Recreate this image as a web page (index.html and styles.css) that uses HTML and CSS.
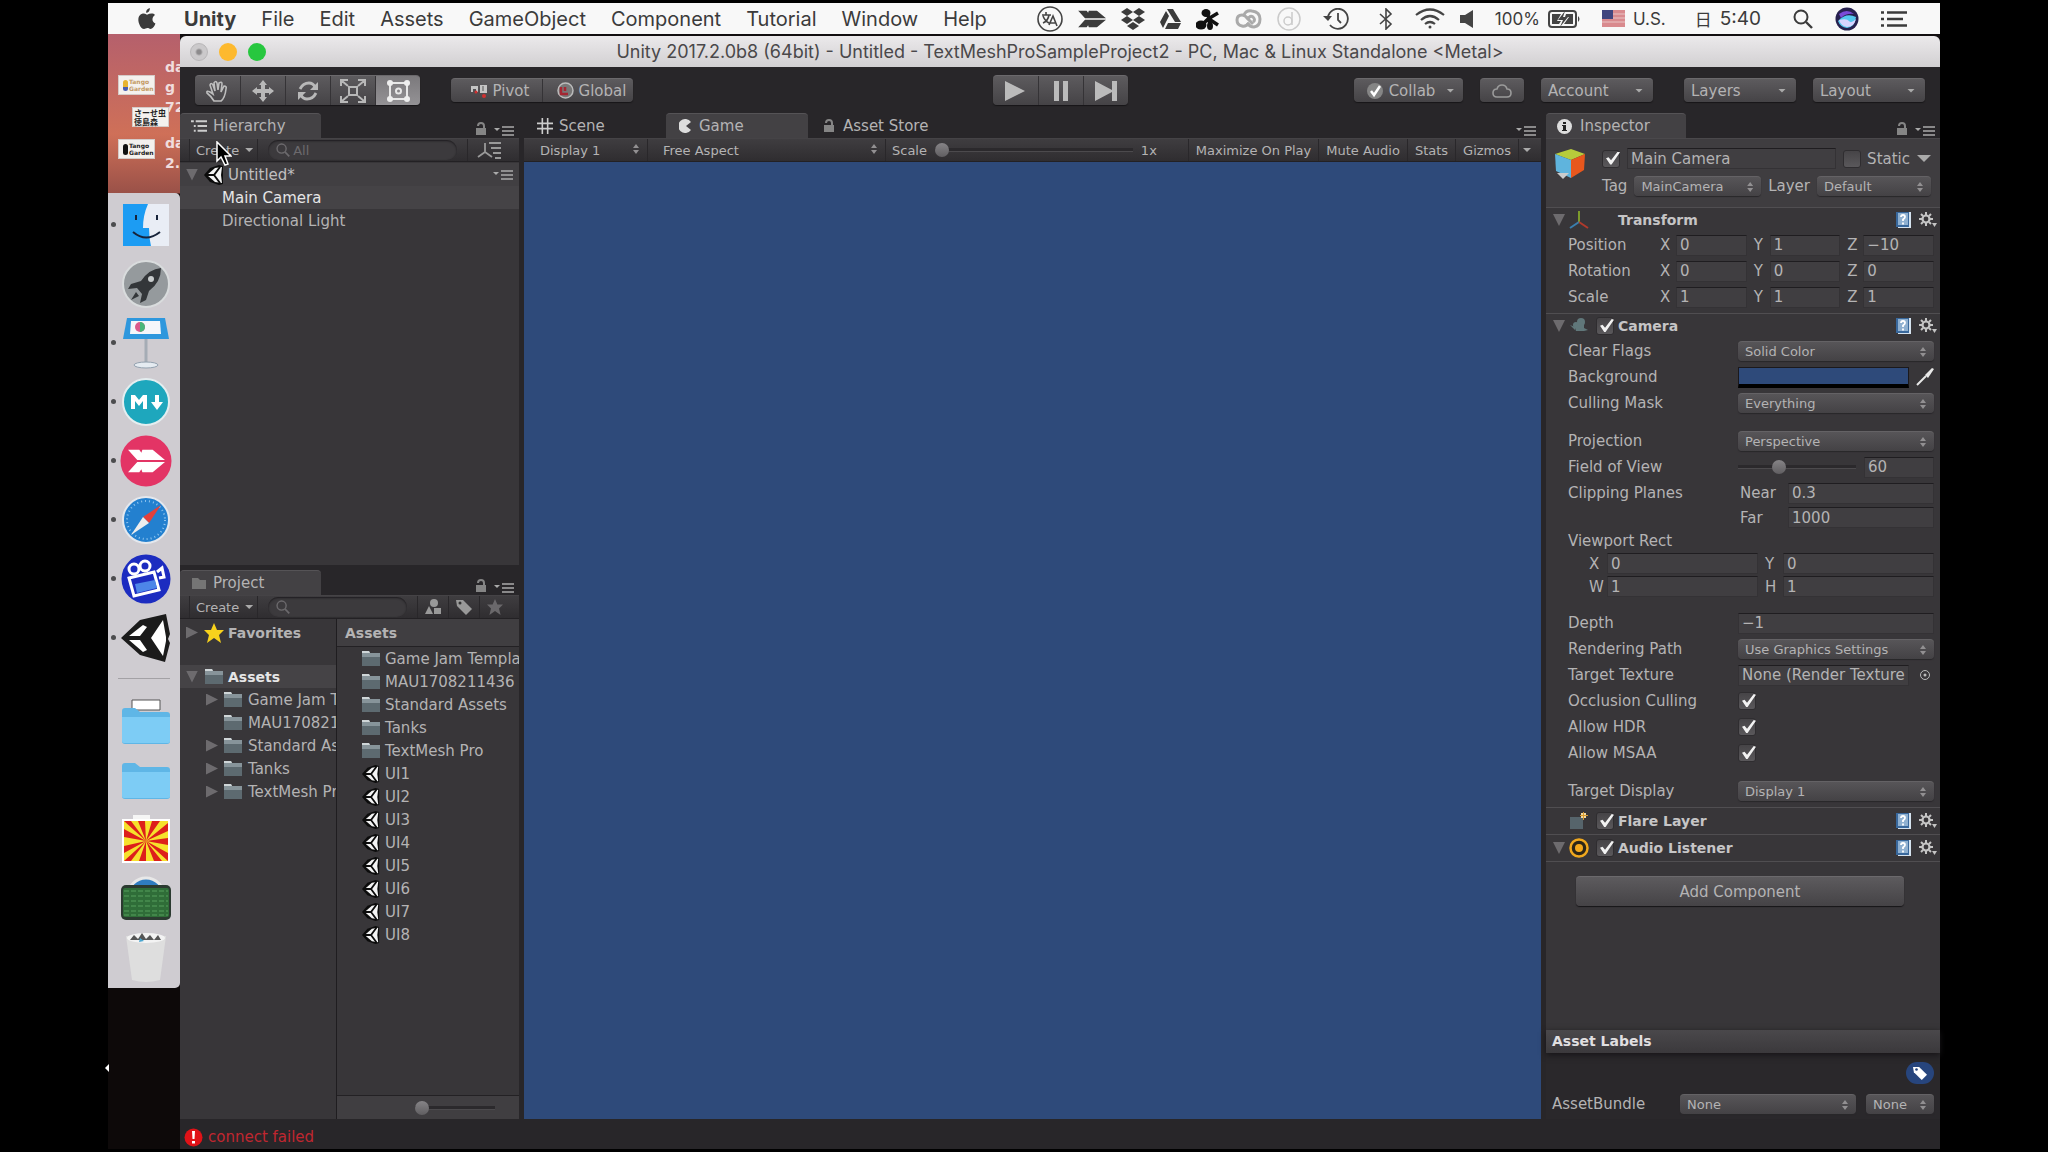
FILE: index.html
```html
<!DOCTYPE html>
<html lang="en">
<head>
    <meta charset="UTF-8">
    <meta name="viewport" content="width=device-width, initial-scale=1.0">
    <title>Unity 2017.2.0b8 (64bit) - Untitled</title>
    <link rel="stylesheet" href="styles.css">
</head>
<body>

<!-- Shared icons -->
<svg class="defs" aria-hidden="true">
    <symbol id="i-scene" viewBox="0 0 20 20">
        <path d="M0 10 6 3l9-3 4 1v18l-4 1-9-3z" fill="#0c0c0c"/>
        <path d="M3 10 11 3l7-1-1 8 1 8-7-1z" fill="#f4f4f4"/>
        <path d="M2 10h8l6-8M10 10l6 8" stroke="#0c0c0c" stroke-width="2" fill="none"/>
    </symbol>
    <symbol id="i-folder" viewBox="0 0 20 18">
        <path d="M1 2h7l1 2h10v12H1z" fill="#5d6a70"/>
        <path d="M1 1h7l1 2h10v4H1z" fill="#87949a"/>
        <path d="M1 1h7l1 2H1z" fill="#cfd6d8"/>
    </symbol>
    <symbol id="i-menu" viewBox="0 0 20 10">
        <path d="M0 2h6L3 5z" fill="#aaa"/>
        <path d="M8 1h12M8 5h12M8 9h12" stroke="#aaa" stroke-width="1.500"/>
    </symbol>
    <symbol id="i-lock" viewBox="0 0 12 14">
        <path d="M1 6h10v7H1z" fill="#858585"/>
        <path d="M3 4a3 3 0 0 1 6 0v3" stroke="#858585" stroke-width="2" fill="none"/>
    </symbol>
    <symbol id="i-help" viewBox="0 0 18 18">
        <path d="M2 1h13v15H2z" fill="#39689c"/>
        <path d="M15 1h2v16H4v-1h11z" fill="#d5e2ee"/>
        <path d="M4 2h10v12H4z" fill="#8fb0d0"/>
        <path d="M7 6q0-2 2-2t2 2q0 1-2 2.500V10M9 11.500v2" fill="none" stroke="#fff" stroke-width="1.800"/>
    </symbol>
    <symbol id="i-gear" viewBox="0 0 18 16">
        <circle cx="7" cy="7" r="3.500" fill="none" stroke="#c4c4c4" stroke-width="2.200"/>
        <path d="M7 0v3M7 11v3M0 7h3M11 7h3M2 2l2 2M10 10l2 2M12 2l-2 2M4 10l-2 2" stroke="#c4c4c4" stroke-width="2"/>
        <path d="M13 11h5l-2.500 4z" fill="#c4c4c4"/>
    </symbol>
    <symbol id="i-zoom" viewBox="0 0 20 20">
        <circle cx="8" cy="8" r="6.500" fill="none" stroke="currentColor" stroke-width="2"/>
        <path d="m13 13 6 6" stroke="currentColor" stroke-width="2.400"/>
    </symbol>
    <symbol id="i-feather" viewBox="0 0 36 22">
        <path d="M0 0h11l2 3 1-3h10l12 10H9zM0 22h11l2-3 1 3h10l12-10H9z"/>
    </symbol>
    <symbol id="i-dockfolder" viewBox="0 0 48 38">
        <path d="M0 5q0-3 3-3h10l5 4h27q3 0 3 3v26q0 3-3 3H3q-3 0-3-3z" fill="#5fb6e6"/>
        <path d="M0 11h48v24q0 2-3 2H3q-3 0-3-2z" fill="#7dccf5"/>
    </symbol>
</svg>

<header class="menubar">
    <nav class="app-menu">
        <svg class="apple" viewBox="0 0 20 24"><path d="M13 1q-4 1-4 5 4 0 4-5M10 8C8 7 6.500 6.500 5 7 1 8 0 13 2 18c1 3 3 5 5 5 1 0 2-1 3.500-1s2 1 4 .8c2-.5 3.500-3 4.300-5.500-4-2-4-6.500-.5-9C17 6.500 13.500 6.300 10 8" fill="#3b3b3b"/></svg>
        <a href="#" class="app-name">Unity</a>
        <a href="#">File</a>
        <a href="#">Edit</a>
        <a href="#">Assets</a>
        <a href="#">GameObject</a>
        <a href="#">Component</a>
        <a href="#">Tutorial</a>
        <a href="#">Window</a>
        <a href="#">Help</a>
    </nav>
    <div class="status-menu">
        <div class="status-group">
            <svg width="26" height="26" viewBox="0 0 26 26" fill="none" stroke="#444" stroke-width="1.600"><circle cx="13" cy="13" r="12"/><path d="M5 9h9M9 6v3M6 17q5-2 6-8M6 10q2 5 6 7M12 19l4-9 4 10M13 17h6"/></svg>
            <svg width="28" height="20" viewBox="0 0 36 22" fill="#3b3b3b"><use href="#i-feather"/></svg>
            <svg width="24" height="22" viewBox="0 0 24 22" fill="#3b3b3b"><path d="m6 0 6 4-6 4-6-4zM18 0l6 4-6 4-6-4zM6 8l6 4-6 4-6-4zM18 8l6 4-6 4-6-4zM12 14l6 4-6 4-6-4z"/></svg>
            <svg width="21" height="20" viewBox="0 0 21 20" fill="#3b3b3b"><path d="M7 0h6l8 13h-6zM6 2l3 5-6 12-3-6zM8 14h13l-3 6H5z"/></svg>
            <svg width="24" height="22" viewBox="0 0 24 22"><g fill="#111"><ellipse cx="10" cy="5" rx="4.500" ry="4"/><ellipse cx="5" cy="17" rx="5.500" ry="4.500"/><ellipse cx="14" cy="18" rx="3" ry="4"/></g><path d="m8 15 5-5-2-5M12 11l10-6M13 11l9 6M13 12l1 5" fill="none" stroke="#111" stroke-width="3.500"/></svg>
            <svg width="27" height="20" viewBox="0 0 27 20" fill="none" stroke="#aaa" stroke-width="3"><path d="M14 14q-3 4-7 3-5-1-5-6t5-5q3 0 6 4l5 5"/><path d="M9 6q2-5 8-4 8 1 8 8t-6 8q-4 0-7-4"/><path d="M13 10q2-4 5-2 3 3 0 5"/></svg>
            <svg width="24" height="24" viewBox="0 0 24 24" fill="none" stroke="#cbcbcb" stroke-width="1.500"><circle cx="12" cy="12" r="11"/><circle cx="11" cy="14" r="4"/><path d="M15 5v13"/></svg>
        </div>
        <div class="status-group wide">
            <svg width="26" height="22" viewBox="0 0 26 22" fill="none" stroke="#444" stroke-width="1.800"><path d="M5 9a10 10 0 1 1 2 8M15 5v7l3 3"/><path d="M0 8h9l-4 5z" fill="#444" stroke="none"/></svg>
            <svg width="14" height="22" viewBox="0 0 14 22" fill="none" stroke="#444" stroke-width="1.600"><path d="m1 6 11 10-5 5V1l5 5L1 16"/></svg>
        </div>
        <div class="status-group">
            <svg width="30" height="21" viewBox="0 0 30 21" fill="none" stroke="#444" stroke-width="2.200"><path d="M1 7q14-11 28 0M6 12q9-8 18 0M10 16q5-4 10 0"/><circle cx="15" cy="19" r="1.500" fill="#444" stroke="none"/></svg>
            <svg width="13" height="18" viewBox="0 0 13 18"><path d="M0 5h5l8-5v18l-8-5H0z" fill="#444"/></svg>
        </div>
        <div class="status-group battery">
            <span class="small">100%</span>
            <svg width="32" height="18" viewBox="0 0 32 18"><rect x="1" y="1" width="27" height="16" rx="3" fill="none" stroke="#444" stroke-width="2"/><path d="M4 4h9L9 11h4l-2 3H4zM18 4h7v10h-9l5-7h-4zM30 6q3 3 0 6zM17 1l-7 9h5l-3 7 8-10h-5z" fill="#444"/></svg>
        </div>
        <div class="status-group battery">
            <svg width="23" height="17" viewBox="0 0 23 17"><rect width="23" height="17" fill="#d98a8e"/><path d="M0 4h23M0 8h23M0 12h23" stroke="#e9c4c5"/><rect width="11" height="9" fill="#41457e"/></svg>
            <span class="small">U.S.</span>
        </div>
        <div class="status-group battery clock"><span class="small">日</span><span>5:40</span></div>
        <div class="status-group end">
            <svg width="20" height="20"><use href="#i-zoom"/></svg>
            <svg width="24" height="24" viewBox="0 0 24 24"><circle cx="12" cy="12" r="11.500" fill="#27214f"/><path d="M3 14q8-9 18-4-1 10-9 11-7-1-9-7" fill="#54c7ee"/><path d="M4 13q8-2 10 1t7-2q-2 8-9 8-6-1-8-7" fill="#d8d4ff"/><path d="M4 7q8-6 15 0-8-1-13 4z" fill="#7b4bd8"/></svg>
            <svg width="26" height="16" viewBox="0 0 26 16" stroke="#3b3b3b" stroke-width="2.500"><path d="M0 1.500h3M0 8h3M0 14.500h3M6 1.500h20M6 8h16M6 14.500h20"/></svg>
        </div>
    </div>
</header>

<main class="desktop">
    <aside class="side">
        <div class="files">
            <div class="thumbs">
                <span class="thumb"><i class="blob warm"></i>Tango<br>Garden</span>
                <span class="thumb cjk">さーせ虫<br>徳島森</span>
                <span class="thumb dark-thumb"><i class="blob"></i>Tango<br>Garden</span>
            </div>
            <div class="names">
                <p>da<br>g<br>72</p>
                <p>da<br>2.</p>
            </div>
        </div>
        <nav class="dock">
            <a href="#" class="running" aria-label="Finder"><svg width="48" height="44" viewBox="0 0 48 44"><path d="M1 1h46v42H1z" fill="#e9edf5"/><path d="M1 1h25q-5 11-5 24h6q0 10 2 18H1z" fill="#1c9cf3"/><path d="M14 12v5M35 12v5M11 29q13 11 27 0" fill="none" stroke="#17233a" stroke-width="2"/></svg></a>
            <a href="#" aria-label="Launchpad"><svg width="48" height="50" viewBox="0 0 48 50"><circle cx="24" cy="25" r="23" fill="#959a9d" stroke="#d9dcdd" stroke-width="2"/><path d="M39 9q-12 1-20 13l-10 3-3 5 9-1 5 6-2 9 6-3 3-9Q39 23 39 9M14 33l-5 8 8-4z" fill="#333639"/><circle cx="29" cy="20" r="3" fill="#c8cccd"/></svg></a>
            <a href="#" class="running" aria-label="Keynote"><svg width="46" height="52" viewBox="0 0 46 52"><path d="M4 1h38l4 21H0z" fill="#2e97dd"/><path d="M8 4h29l1 13H7z" fill="#f5f6fa"/><circle cx="17" cy="10" r="5" fill="#d95a8c"/><path d="M17 5a5 5 0 0 1 0 10z" fill="#49b67a"/><path d="M23 22v25" stroke="#a5acb5" stroke-width="3"/><ellipse cx="23" cy="48" rx="12" ry="3" fill="#e5ebf1" stroke="#94a2b0"/></svg></a>
            <a href="#" class="running" aria-label="Markdown"><svg width="48" height="50" viewBox="0 0 48 50"><circle cx="24" cy="25" r="23" fill="#1ea7bd" stroke="#e4eef0" stroke-width="2"/><path d="M9 32V18h4l4 5 4-5h4v14h-4v-8l-4 5-4-5v8zM33 18h4v7h4l-6 8-6-8h4z" fill="#fff"/></svg></a>
            <a href="#" class="running" aria-label="Skitch"><svg width="52" height="52" viewBox="0 0 52 52"><circle cx="26" cy="26" r="25.500" fill="#e33465"/><use href="#i-feather" x="8" y="14" width="37" height="24" fill="#fff"/></svg></a>
            <a href="#" class="running" aria-label="Safari"><svg width="48" height="50" viewBox="0 0 48 50"><circle cx="24" cy="25" r="23" fill="#2380cf" stroke="#e4e8ee" stroke-width="2"/><circle cx="24" cy="25" r="19" fill="none" stroke="#8fc4ee" stroke-width="2" stroke-dasharray="1 3"/><path d="m39 10-18 12 6 6z" fill="#e3403c"/><path d="m9 40 18-12-6-6z" fill="#eee"/></svg></a>
            <a href="#" class="running" aria-label="Recorder"><svg width="50" height="50" viewBox="0 0 50 50" fill="none" stroke="#fff" stroke-width="3"><circle cx="25" cy="25" r="24.500" fill="#1c2cc0" stroke="none"/><circle cx="13" cy="15" r="5"/><circle cx="24" cy="12" r="5"/><path d="m8 24 25-6 5 18-25 6zM36 18l5-4 2 9-5 1"/><path d="m14 30 20-4 2 8-20 5z" fill="#4d86e8" stroke="none"/></svg></a>
            <a href="#" class="running" aria-label="Unity"><svg width="50" height="48" viewBox="0 0 50 48"><path d="M0 24 19 6 45 0l4 20-2 5 2 4-5 19-25-7z" fill="#1b1b1b"/><path d="M8 22 22 11l4 2-7 9zM8 26h11l7 10-4 2zM30 24l12-18 3 17v4l-3 15z" fill="#fff"/></svg></a>
            <hr>
            <a href="#" aria-label="Documents"><svg width="48" height="46" viewBox="0 0 48 46"><path d="M10 2h28v10H10z" fill="#fff" stroke="#555"/><use href="#i-dockfolder" y="8" width="48" height="38"/></svg></a>
            <a href="#" aria-label="Folder"><svg width="48" height="38"><use href="#i-dockfolder"/></svg></a>
            <a href="#" aria-label="Artwork"><svg width="48" height="48" viewBox="0 0 48 48"><path d="M11 0h17v6H11z" fill="#f5f5f5"/><path d="M0 4h48v44H0z" fill="#fff"/><path d="M2 6h44v40H2z" fill="#f6e12c"/><path d="M24 26 2 6h7zM24 26 16 6h7zM24 26l6-20h8zM24 26 46 8v8zM24 26l22-3v7zM24 26l22 12v8zM24 26l16 20h-8zM24 26l0 20h-7zM24 26 9 46H2zM24 26 2 38v-7zM24 26 2 22v-8z" fill="#dd1f1b"/></svg></a>
            <a href="#" aria-label="Downloads"><svg width="50" height="44" viewBox="0 0 50 44"><circle cx="25" cy="20" r="18" fill="#2f7cc0" stroke="#e8e8e8" stroke-width="3"/><rect y="9" width="50" height="35" rx="5" fill="#2b3a30"/><rect x="2" y="12" width="46" height="29" rx="2" fill="#2f6d38"/><path d="M3 15h44M3 20h44M3 25h44M3 30h44M3 35h44M3 39h44" stroke="#57a05c" stroke-dasharray="5 2"/></svg></a>
            <a href="#" aria-label="Trash"><svg width="42" height="50" viewBox="0 0 42 50"><path d="M1 4h40l-6 44q-14 4-28 0z" fill="#dedede"/><ellipse cx="21" cy="6" rx="19" ry="5" fill="#f3f3f3"/><path d="m5 8 4-5 4 4 4-6 4 6 4-4 4 5 4-5 3 5z" fill="#555"/><path d="m15 6 4 3-5 1z" fill="#4ba6cf"/></svg></a>
        </nav>
        <svg class="expand" viewBox="0 0 4 8"><path d="M4 0v8L0 4z" fill="#fff"/></svg>
    </aside>

    <section class="window">
        <div class="titlebar">
            <div class="lights"><button class="close" aria-label="Close"></button><button class="minimize" aria-label="Minimize"></button><button class="zoom" aria-label="Zoom"></button></div>
            <h1>Unity 2017.2.0b8 (64bit) - Untitled - TextMeshProSampleProject2 - PC, Mac &amp; Linux Standalone &lt;Metal&gt;</h1>
        </div>

        <div class="toolbar">
            <div class="tools-left">
                <div class="btn-group tall">
                    <button aria-label="Hand"><svg width="26" height="24" viewBox="0 0 26 24"><path d="M9 22q-3-5-7-8-1-3 3-1l3 2-3-9q1-3 3 0l2 6-1-8q2-3 3 0l1 7 1-7q3-2 3 1l-1 8 3-6q3 0 2 3-1 9-5 12z" fill="none" stroke="#bdbdbd" stroke-width="1.600"/></svg></button>
                    <button aria-label="Move"><svg width="22" height="22" viewBox="0 0 22 22"><path d="m11 0 4 5h-2v4h4V7l5 4-5 4v-2h-4v4h2l-4 5-4-5h2v-4H5v2l-5-4 5-4v2h4V5H7z" fill="#b8b8b8"/></svg></button>
                    <button aria-label="Rotate"><svg width="22" height="20" viewBox="0 0 22 20"><path d="M3 8q3-6 9-6 4 0 6 4M19 12q-3 6-9 6-4 0-6-4" fill="none" stroke="#b8b8b8" stroke-width="2.800"/><path d="M21 1v8h-8zM1 19v-8h8z" fill="#b8b8b8"/></svg></button>
                    <button aria-label="Scale"><svg width="26" height="24" viewBox="0 0 26 24" fill="none" stroke="#b8b8b8" stroke-width="2"><path d="M9 8h8v8H9zM8 7 2 2M18 7l6-5M8 17l-6 5M18 17l6 5M1 7V1h7M18 1h7v6M1 17v6h7M25 17v6h-7"/></svg></button>
                    <button class="active" aria-label="Rect"><svg width="25" height="24" viewBox="0 0 25 24"><path d="M4 4h17v16H4z" fill="none" stroke="#e8e8e8" stroke-width="2"/><circle cx="12.500" cy="12" r="2.500" fill="none" stroke="#e8e8e8" stroke-width="2"/><g fill="#eee"><circle cx="4" cy="4" r="3"/><circle cx="21" cy="4" r="3"/><circle cx="4" cy="20" r="3"/><circle cx="21" cy="20" r="3"/></g></svg></button>
                </div>
                <div class="btn-group pivot">
                    <button><svg width="17" height="14" viewBox="0 0 17 14"><path d="M0 2h7v6H5V5H2v3H0zM9 1h7v8H9z" fill="#c4c4c4"/><path d="M12 2v5" stroke="#555"/><circle cx="5" cy="8" r="1.500" fill="#d03030"/><circle cx="13" cy="12" r="2" fill="#d03030"/></svg>Pivot</button>
                    <button><svg width="17" height="17" viewBox="0 0 17 17"><circle cx="8.500" cy="8.500" r="7.500" fill="#777" stroke="#bbb" stroke-width="1.500"/><path d="M4 5v7h7M8 5v4" stroke="#a52632" stroke-width="2.500" fill="none"/></svg>Global</button>
                </div>
            </div>
            <div class="btn-group tall">
                <button aria-label="Play"><svg width="20" height="20"><path d="m0 0 20 10L0 20z" fill="#bbb"/></svg></button>
                <button aria-label="Pause"><svg width="14" height="20"><path d="M0 0h5v20H0zM9 0h5v20H9z" fill="#bbb"/></svg></button>
                <button aria-label="Step"><svg width="22" height="20"><path d="m0 0 17 9V0h5v20h-5v-9L0 20z" fill="#bbb"/></svg></button>
            </div>
            <div class="tools-right">
                <button class="btn collab"><svg width="16" height="16" viewBox="0 0 16 16"><circle cx="8" cy="8" r="8" fill="#858585"/><path d="m4 8 3 4 6-9" stroke="#fff" stroke-width="2.500" fill="none"/></svg>Collab<i class="caret"></i></button>
                <button class="btn cloud" aria-label="Cloud"><svg width="20" height="14" viewBox="0 0 20 14"><path d="M5 13q-4 0-4-4t4-4q1-4 5-4t5 4q4 0 4 4t-4 4z" fill="none" stroke="#9b9b9b" stroke-width="1.600"/></svg></button>
                <button class="btn drop account">Account<i class="caret"></i></button>
                <button class="btn drop">Layers<i class="caret"></i></button>
                <button class="btn drop">Layout<i class="caret"></i></button>
            </div>
        </div>

        <div class="panels">
            <div class="left-column">
                <section class="panel hierarchy">
                    <div class="tabs">
                        <button class="tab active"><svg width="16" height="14" viewBox="0 0 17 14"><path d="M0 2h3M5 2h12M3 7h2M7 7h10M3 12h2M7 12h10" stroke="#ccc" stroke-width="2"/></svg>Hierarchy</button>
                        <span class="panel-menu"><svg width="12" height="14"><use href="#i-lock"/></svg><svg width="20" height="10"><use href="#i-menu"/></svg></span>
                    </div>
                    <div class="bar">
                        <button class="create">Create<i class="caret"></i></button>
                        <label class="search"><svg width="14" height="14"><use href="#i-zoom"/></svg><input type="text" placeholder="All" aria-label="Search hierarchy"></label>
                        <button class="icon-btn" aria-label="Sort"><svg width="24" height="18" viewBox="0 0 24 18" fill="none" stroke="#999" stroke-width="1.800"><path d="M8 2v9l-7 5M8 11l7 5M12 2h12M14 7h10M16 12h8M18 17h6"/></svg></button>
                    </div>
                    <ul class="tree">
                        <li class="scene"><i class="fold open"></i><svg width="20" height="20"><use href="#i-scene"/></svg><span>Untitled*</span><svg class="row-menu" width="20" height="10"><use href="#i-menu"/></svg></li>
                        <li class="object selected">Main Camera</li>
                        <li class="object">Directional Light</li>
                    </ul>
                </section>

                <section class="panel project">
                    <div class="tabs">
                        <button class="tab active"><svg width="16" height="13"><path d="M1 1h6l2 2h6v9H1z" fill="#757575"/></svg>Project</button>
                        <span class="panel-menu"><svg width="12" height="14"><use href="#i-lock"/></svg><svg width="20" height="10"><use href="#i-menu"/></svg></span>
                    </div>
                    <div class="bar">
                        <button class="create">Create<i class="caret"></i></button>
                        <label class="search"><svg width="14" height="14"><use href="#i-zoom"/></svg><input type="text" aria-label="Search project"></label>
                        <button class="icon-btn" aria-label="By type"><svg width="16" height="16" viewBox="0 0 16 16" fill="#999"><circle cx="9" cy="4" r="4"/><path d="m4 7 4 8H0zM9 9h7v6H9z"/></svg></button>
                        <button class="icon-btn" aria-label="By label"><svg width="16" height="16" viewBox="0 0 16 16"><path d="M0 1h7l9 9-6 6-9-9z" fill="#999"/><circle cx="4" cy="4" r="1.500" fill="#333"/></svg></button>
                        <button class="icon-btn" aria-label="Save search"><svg width="16" height="16" viewBox="0 0 20 20"><path d="m10 0 3 7h7l-5 5 2 8-7-5-7 5 2-8-5-5h7z" fill="#6a686b"/></svg></button>
                    </div>
                    <div class="browser">
                        <ul class="tree folders">
                            <li class="favorites"><i class="fold"></i><svg width="20" height="20" viewBox="0 0 20 20"><path d="m10 0 3 7h7l-5 5 2 8-7-5-7 5 2-8-5-5h7z" fill="#f8d21c"/></svg><span>Favorites</span></li>
                            <li class="root selected"><i class="fold open"></i><svg width="20" height="18"><use href="#i-folder"/></svg><span>Assets</span></li>
                            <li class="child"><i class="fold"></i><svg width="20" height="18"><use href="#i-folder"/></svg><span>Game Jam Template</span></li>
                            <li class="child"><i class="fold none"></i><svg width="20" height="18"><use href="#i-folder"/></svg><span>MAU1708211436</span></li>
                            <li class="child"><i class="fold"></i><svg width="20" height="18"><use href="#i-folder"/></svg><span>Standard Assets</span></li>
                            <li class="child"><i class="fold"></i><svg width="20" height="18"><use href="#i-folder"/></svg><span>Tanks</span></li>
                            <li class="child"><i class="fold"></i><svg width="20" height="18"><use href="#i-folder"/></svg><span>TextMesh Pro</span></li>
                        </ul>
                        <div class="contents">
                            <h2>Assets</h2>
                            <ul class="tree">
                                <li><svg width="20" height="18"><use href="#i-folder"/></svg><span>Game Jam Template</span></li>
                                <li><svg width="20" height="18"><use href="#i-folder"/></svg><span>MAU1708211436</span></li>
                                <li><svg width="20" height="18"><use href="#i-folder"/></svg><span>Standard Assets</span></li>
                                <li><svg width="20" height="18"><use href="#i-folder"/></svg><span>Tanks</span></li>
                                <li><svg width="20" height="18"><use href="#i-folder"/></svg><span>TextMesh Pro</span></li>
                                <li><svg width="20" height="18"><use href="#i-scene"/></svg><span>UI1</span></li>
                                <li><svg width="20" height="18"><use href="#i-scene"/></svg><span>UI2</span></li>
                                <li><svg width="20" height="18"><use href="#i-scene"/></svg><span>UI3</span></li>
                                <li><svg width="20" height="18"><use href="#i-scene"/></svg><span>UI4</span></li>
                                <li><svg width="20" height="18"><use href="#i-scene"/></svg><span>UI5</span></li>
                                <li><svg width="20" height="18"><use href="#i-scene"/></svg><span>UI6</span></li>
                                <li><svg width="20" height="18"><use href="#i-scene"/></svg><span>UI7</span></li>
                                <li><svg width="20" height="18"><use href="#i-scene"/></svg><span>UI8</span></li>
                            </ul>
                            <div class="size-bar"><input type="range" value="0" aria-label="Icon size"></div>
                        </div>
                    </div>
                </section>
            </div>

            <section class="panel game">
                <div class="tabs">
                    <button class="tab"><svg width="16" height="18" viewBox="0 0 18 18"><path d="M0 6h18M0 12h18M6 0v18M12 0v18" stroke="#ccc" stroke-width="1.800"/></svg>Scene</button>
                    <button class="tab active"><svg width="14" height="14" viewBox="0 0 14 14"><path d="M12 3a7 7 0 1 0 0 8L7 7z" fill="#ddd"/></svg>Game</button>
                    <button class="tab"><svg width="16" height="14"><use href="#i-lock"/></svg>Asset Store</button>
                    <span class="panel-menu"><svg width="20" height="10"><use href="#i-menu"/></svg></span>
                </div>
                <div class="bar">
                    <span class="select flat display"><select aria-label="Display"><option>Display 1</option></select></span>
                    <span class="select flat aspect"><select aria-label="Aspect"><option>Free Aspect</option></select></span>
                    <label class="scale">Scale<input type="range" value="0">1x</label>
                    <button class="bar-btn">Maximize On Play</button>
                    <button class="bar-btn">Mute Audio</button>
                    <button class="bar-btn">Stats</button>
                    <button class="bar-btn">Gizmos</button>
                    <button class="bar-btn more" aria-label="Gizmo options"><i class="caret"></i></button>
                </div>
                <div class="viewport"></div>
            </section>

            <section class="panel inspector">
                <div class="tabs">
                    <button class="tab active"><svg width="15" height="15" viewBox="0 0 15 15"><circle cx="7.500" cy="7.500" r="7.500" fill="#ddd"/><path d="M6 3h3v2H6zM5 6h4v5h1v1H5v-1h1V7H5z" fill="#222"/></svg>Inspector</button>
                    <span class="panel-menu"><svg width="12" height="14"><use href="#i-lock"/></svg><svg width="20" height="10"><use href="#i-menu"/></svg></span>
                </div>

                <div class="object-head">
                    <svg class="cube" width="32" height="32" viewBox="0 0 32 32"><path d="m1 6 16-5 14 5-14 6z" fill="#b7cc3b"/><path d="m1 6 16 6v18L2 23z" fill="#5fb4dd"/><path d="m31 6-14 6v18l13-8z" fill="#e8571d"/><path d="M3 25h12l-6 6z" fill="#ccc"/></svg>
                    <div class="head-rows">
                        <div class="head-row">
                            <input type="checkbox" checked aria-label="Active">
                            <input type="text" class="name" value="Main Camera" aria-label="Name">
                            <label class="static"><input type="checkbox">Static</label><i class="caret big"></i>
                        </div>
                        <div class="head-row">
                            <label for="tag">Tag</label><span class="select"><select id="tag"><option>MainCamera</option></select></span>
                            <label for="layer">Layer</label><span class="select layer"><select id="layer"><option>Default</option></select></span>
                        </div>
                    </div>
                </div>

                <section class="component">
                    <header><i class="fold open"></i><svg width="20" height="18" viewBox="0 0 20 18" fill="none" stroke-width="2"><path d="M10 11V0" stroke="#7d9b2c"/><path d="m10 11-9 6" stroke="#3a7fae"/><path d="m10 11 9 6" stroke="#b03a2c"/></svg><h3 class="indent">Transform</h3><svg width="18" height="18"><use href="#i-help"/></svg><svg width="18" height="16"><use href="#i-gear"/></svg></header>
                    <div class="row"><span class="label narrow">Position</span><div class="vector"><label>X<input type="text" value="0"></label><label>Y<input type="text" value="1"></label><label>Z<input type="text" value="−10"></label></div></div>
                    <div class="row"><span class="label narrow">Rotation</span><div class="vector"><label>X<input type="text" value="0"></label><label>Y<input type="text" value="0"></label><label>Z<input type="text" value="0"></label></div></div>
                    <div class="row"><span class="label narrow">Scale</span><div class="vector"><label>X<input type="text" value="1"></label><label>Y<input type="text" value="1"></label><label>Z<input type="text" value="1"></label></div></div>
                </section>

                <section class="component">
                    <header><i class="fold open"></i><svg width="20" height="16" viewBox="0 0 20 16" fill="#60777a"><circle cx="7" cy="7" r="3"/><circle cx="12" cy="4" r="4"/><path d="M5 7h10v6H7zM1 7l5 2v3zM15 10l4 2-4 1z"/></svg><input type="checkbox" checked aria-label="Camera enabled"><h3>Camera</h3><svg width="18" height="18"><use href="#i-help"/></svg><svg width="18" height="16"><use href="#i-gear"/></svg></header>
                    <div class="row"><label class="label" for="flags">Clear Flags</label><span class="select"><select id="flags"><option>Solid Color</option></select></span></div>
                    <div class="row"><span class="label">Background</span><button class="swatch" aria-label="Background"></button><svg class="picker" width="18" height="18" viewBox="0 0 18 18"><path d="m1 17 9-9" stroke="#e8e8e8" stroke-width="2"/><path d="m9 7 7-7 2 1-6 9z" fill="#e8e8e8"/></svg></div>
                    <div class="row"><label class="label" for="mask">Culling Mask</label><span class="select"><select id="mask"><option>Everything</option></select></span></div>
                    <div class="row spaced"><label class="label" for="projection">Projection</label><span class="select"><select id="projection"><option>Perspective</option></select></span></div>
                    <div class="row"><label class="label" for="fov">Field of View</label><input type="range" class="fov" id="fov" value="33"><input type="text" class="fov-value" value="60" aria-label="Field of view value"></div>
                    <div class="row"><span class="label">Clipping Planes</span><label class="plane">Near<input type="text" value="0.3"></label></div>
                    <div class="row compact"><span class="label"></span><label class="plane">Far<input type="text" value="1000"></label></div>
                    <div class="row compact"><span class="label">Viewport Rect</span></div>
                    <div class="row compact"><div class="vector rect"><label>X<input type="text" value="0"></label><label>Y<input type="text" value="0"></label></div></div>
                    <div class="row compact"><div class="vector rect"><label>W<input type="text" value="1"></label><label>H<input type="text" value="1"></label></div></div>
                    <div class="row spaced"><label class="label" for="depth">Depth</label><input type="text" id="depth" value="−1"></div>
                    <div class="row"><label class="label" for="path">Rendering Path</label><span class="select"><select id="path"><option>Use Graphics Settings</option></select></span></div>
                    <div class="row"><label class="label" for="texture">Target Texture</label><input type="text" id="texture" value="None (Render Texture)"><svg class="picker" width="18" height="12" viewBox="0 0 18 12"><circle cx="9" cy="6" r="4.500" fill="none" stroke="#bbb"/><circle cx="9" cy="6" r="1.500" fill="#bbb"/></svg></div>
                    <div class="row"><label class="label" for="occlusion">Occlusion Culling</label><input type="checkbox" id="occlusion" checked></div>
                    <div class="row"><label class="label" for="hdr">Allow HDR</label><input type="checkbox" id="hdr" checked></div>
                    <div class="row"><label class="label" for="msaa">Allow MSAA</label><input type="checkbox" id="msaa" checked></div>
                    <div class="row spaced"><label class="label" for="target">Target Display</label><span class="select"><select id="target"><option>Display 1</option></select></span></div>
                </section>

                <section class="component folded">
                    <header><i class="fold none"></i><svg width="20" height="18" viewBox="0 0 20 18"><path d="M1 5h13v12H1z" fill="#56646b"/><path d="M12 1h5v5h-5z" fill="#f2d9a0"/><path d="M14.500 0v8M11 3.500h8" stroke="#d89a2c"/></svg><input type="checkbox" checked aria-label="Flare Layer enabled"><h3>Flare Layer</h3><svg width="18" height="18"><use href="#i-help"/></svg><svg width="18" height="16"><use href="#i-gear"/></svg></header>
                </section>
                <section class="component folded last">
                    <header><i class="fold open"></i><svg width="20" height="20" viewBox="0 0 20 20"><circle cx="10" cy="10" r="8.500" fill="#2c2618" stroke="#f0a81e" stroke-width="2.500"/><circle cx="10" cy="10" r="4" fill="#f5a91c"/></svg><input type="checkbox" checked aria-label="Audio Listener enabled"><h3>Audio Listener</h3><svg width="18" height="18"><use href="#i-help"/></svg><svg width="18" height="16"><use href="#i-gear"/></svg></header>
                </section>
                <button class="btn add">Add Component</button>

                <section class="asset-labels">
                    <h3>Asset Labels</h3>
                    <button class="tag-btn" aria-label="Add label"><svg width="14" height="14" viewBox="0 0 16 16"><path d="M0 1h7l9 9-6 6-9-9z" fill="#fff"/><circle cx="4" cy="4" r="1.500" fill="#27457d"/></svg></button>
                    <div class="bundle"><label for="bundle">AssetBundle</label><span class="select"><select id="bundle"><option>None</option></select></span><span class="select variant"><select aria-label="Variant"><option>None</option></select></span></div>
                </section>
            </section>
        </div>

        <footer class="statusbar"><svg width="19" height="19" viewBox="0 0 19 19"><circle cx="9.500" cy="9.500" r="9" fill="#e01217"/><path d="M8 3h3l-.5 8h-2zM8 13h3v2.500H8z" fill="#fff"/></svg>connect failed</footer>
    </section>
    <svg class="cursor" viewBox="0 0 16 25"><path d="M1 1v19l4-4 4 8 3-1-3-8h6z" fill="#000" stroke="#fff" stroke-width="1.500"/></svg>
</main>

</body>
</html>
```
FILE: styles.css
```css
* {
    box-sizing: border-box;
}
body {
    margin: 0;
    padding: 3px 108px;
    min-height: 100vh;
    display: flex;
    flex-direction: column;
    background-color: #000;
    color: #b4b3b4;
    font-family: "DejaVu Sans", "Noto Sans CJK JP", sans-serif;
    font-size: 15px;
}
svg {
    flex: none;
    display: block;
}
button, input, select {
    font: inherit;
    color: inherit;
    margin: 0;
    padding: 0;
    border: 0;
    background: none;
    border-radius: 0;
    outline: none;
}
ul {
    list-style: none;
    margin: 0;
    padding: 0;
}
h1, h2, h3 {
    margin: 0;
}
.defs {
    position: absolute;
    width: 0;
    height: 0;
}

/* Mac menu bar */
.menubar {
    height: 31px;
    background-color: #f8f8f8;
    color: #3b3b3b;
    font-family: Inter, "Noto Sans CJK JP", sans-serif;
    font-size: 20px;
    display: flex;
    align-items: center;
    justify-content: space-between;
    padding: 0 33px 0 27px;
}
.app-menu, .status-menu, .status-group {
    display: flex;
    align-items: center;
}
.app-menu {
    gap: 25px;
}
.app-menu a {
    color: inherit;
    text-decoration: none;
}
.app-menu .app-name {
    font-weight: 700;
}
.apple {
    width: 24px;
    height: 23px;
}
.status-menu {
    gap: 22px;
}
.status-group {
    gap: 15px;
}
.status-group.wide {
    gap: 30px;
}
.status-group.battery {
    gap: 8px;
}
.status-group.end {
    gap: 22px;
    padding-left: 10px;
}
.status-group.clock {
    padding-left: 7px;
    font-size: 19px;
}
.status-menu .small {
    font-size: 17px;
}

/* Desktop and dock */
.desktop {
    flex: 1;
    display: flex;
    position: relative;
    background-color: #120e10;
}
.side {
    width: 72px;
    position: relative;
    display: flex;
    flex-direction: column;
    background: linear-gradient(#b5606c, #cf7058 100px, #9a5148 159px, #0d0909 160px);
}
.files {
    height: 159px;
    display: grid;
    grid-template-columns: 57px 15px;
    overflow: hidden;
    color: #f0dcdc;
    font-weight: bold;
    font-size: 14px;
    line-height: 20px;
}
.thumbs {
    display: flex;
    flex-direction: column;
    gap: 12px;
    padding: 41px 0 0 10px;
    position: relative;
    z-index: 1;
}
.names {
    padding-top: 23px;
}
.names p {
    margin: 0 0 16px;
}
.thumb {
    display: flex;
    align-items: center;
    width: 37px;
    height: 20px;
    background-color: #f4f1ee;
    border: 1px solid #d5cbc8;
    color: #c39a63;
    font: bold 6px/7px "DejaVu Sans", sans-serif;
    position: relative;
    padding-left: 10px;
}
.thumb.cjk {
    color: #222;
    font: bold 8px/9px "Noto Sans CJK JP", sans-serif;
    padding-left: 1px;
    margin-left: 14px;
}
.dark-thumb {
    color: #222;
}
.blob {
    position: absolute;
    left: 4px;
    width: 5px;
    height: 11px;
    border-radius: 3px;
    background-color: #111;
}
.warm {
    background: linear-gradient(#e7b32f 60%, #4a5db0 60%);
}
.dock {
    background-color: #cfccd1;
    border-radius: 0 5px 5px 0;
    padding: 2px 0;
}
.dock a {
    height: 59px;
    display: flex;
    align-items: center;
    justify-content: center;
    position: relative;
    padding-left: 4px;
}
.dock .running::before {
    content: "";
    position: absolute;
    left: 3px;
    width: 5px;
    height: 5px;
    border-radius: 50%;
    background-color: #4c4c4e;
}
.dock hr {
    border: 0;
    border-top: 1px solid #a3a1a5;
    margin: 11px 10px 12px;
}
.expand {
    position: absolute;
    left: -3px;
    bottom: 77px;
    width: 4px;
    height: 8px;
}
.cursor {
    position: absolute;
    left: 108px;
    top: 107px;
    width: 16px;
    height: 25px;
}

/* Unity window */
.window {
    flex: 1;
    min-width: 0;
    margin-top: 2px;
    display: flex;
    flex-direction: column;
    background-color: #282629;
    border-radius: 6px 6px 0 0;
}
.titlebar {
    height: 31px;
    position: relative;
    display: flex;
    align-items: center;
    justify-content: center;
    background: linear-gradient(#ebe9eb, #d2d0d2);
    border-radius: 6px 6px 0 0;
    color: #4a484a;
}
.titlebar h1 {
    font: 400 18px/31px Inter, sans-serif;
}
.lights {
    position: absolute;
    left: 10px;
    display: flex;
    gap: 11px;
}
.lights button {
    width: 18px;
    height: 18px;
    border-radius: 50%;
}
.lights .close {
    background: radial-gradient(#8d8b8d 2px, #cbc9cb 4px);
    border: 1px solid #b8b6b8;
}
.lights .minimize {
    background-color: #fdb92e;
}
.lights .zoom {
    background-color: #27c73f;
}

/* Main toolbar */
.toolbar {
    height: 46px;
    padding: 0 15px;
    display: grid;
    grid-template-columns: 1fr auto 1fr;
    align-items: center;
}
.tools-left, .tools-right {
    display: flex;
    align-items: center;
}
.tools-left {
    gap: 31px;
}
.tools-right {
    justify-content: flex-end;
    gap: 17px;
}
.btn, .btn-group {
    height: 24px;
    border-radius: 4px;
    background: linear-gradient(#5d5b5e, #454346);
    box-shadow: 0 1px 1px #171618;
    border-top: 1px solid #6b696c;
}
.btn-group {
    display: flex;
    overflow: hidden;
}
.btn-group button {
    width: 45px;
    display: flex;
    align-items: center;
    justify-content: center;
    gap: 5px;
}
.btn-group button + button {
    border-left: 1px solid #353336;
}
.btn-group.tall {
    height: 30px;
}
.btn-group.pivot button {
    width: 91px;
    padding-left: 7px;
}
.btn-group .active {
    background: linear-gradient(#7b797c, #949295);
}
.btn {
    display: flex;
    align-items: center;
    justify-content: center;
    gap: 6px;
}
.collab {
    width: 109px;
    padding-left: 4px;
}
.cloud {
    width: 44px;
}
.drop {
    width: 112px;
    justify-content: space-between;
    padding: 0 10px 0 7px;
}
.account {
    margin-right: 14px;
}
.caret {
    width: 8px;
    height: 4px;
    background-color: #aaa;
    clip-path: polygon(0 0, 100% 0, 50% 100%);
}
.collab .caret {
    margin-left: 5px;
}
.caret.big {
    width: 14px;
    height: 7px;
}

/* Panels */
.panels {
    flex: 1;
    display: flex;
    gap: 5px;
}
.left-column {
    width: 339px;
    display: flex;
    flex-direction: column;
    gap: 5px;
}
.panel {
    display: flex;
    flex-direction: column;
    min-width: 0;
}
.hierarchy {
    height: 452px;
    background-color: #383639;
}
.project {
    flex: 1;
    background-color: #383639;
}
.tabs {
    height: 25px;
    display: flex;
    background-color: #282629;
}
.tab {
    width: 141px;
    display: flex;
    align-items: center;
    gap: 6px;
    padding-left: 11px;
    border-radius: 4px 4px 0 0;
}
.game .tab {
    width: 142px;
    padding-left: 13px;
}
.tab.active {
    background-color: #434144;
    border-top: 1px solid #555356;
}
.panel-menu {
    margin-left: auto;
    padding: 0 5px 2px 0;
    display: flex;
    align-items: flex-end;
    gap: 7px;
}
.bar {
    height: 24px;
    display: flex;
    align-items: stretch;
    background: linear-gradient(#3f3d40, #2f2d30);
    border-top: 1px solid #454346;
    border-bottom: 1px solid #232124;
    font-size: 13px;
}
.create {
    display: flex;
    align-items: center;
    gap: 6px;
    margin-left: 9px;
    padding: 0 4px 0 6px;
    border: solid #29272a;
    border-width: 0 1px;
}
.search {
    flex: 1;
    display: flex;
    align-items: center;
    gap: 3px;
    margin: 1px 10px;
    padding: 0 8px;
    min-width: 0;
    border-radius: 10px;
    background-color: #3c3a3d;
    box-shadow: inset 0 1px 2px #1d1b1e;
    color: #6c6a6d;
}
.search input {
    flex: 1;
    min-width: 0;
}
.search input::placeholder {
    color: #6c6a6d;
}
.icon-btn {
    width: 31px;
    display: flex;
    align-items: center;
    justify-content: center;
    border-left: 1px solid #29272a;
}
.left-column .bar {
    padding-right: 9px;
}
.hierarchy .icon-btn {
    width: 43px;
}

/* Trees */
.tree li {
    height: 23px;
    display: flex;
    align-items: center;
    white-space: nowrap;
    gap: 4px;
}
.fold {
    flex: none;
    width: 12px;
    height: 12px;
    background-color: #6d6b6e;
    clip-path: polygon(0 0, 100% 50%, 0 100%);
}
.fold.open {
    clip-path: polygon(0 0, 100% 0, 50% 100%);
}
.fold.none {
    visibility: hidden;
}
.hierarchy .tree {
    padding-top: 1px;
}
.tree .scene {
    padding: 0 6px;
    background-color: #413f42;
}
.scene span {
    color: #c0bfc0;
}
.tree .scene svg {
    margin-left: 2px;
}
.tree .scene .row-menu {
    margin-left: auto;
}
.tree .object {
    padding-left: 42px;
}
.tree .selected {
    background-color: #454346;
    color: #e6e6e6;
}
.browser {
    flex: 1;
    display: flex;
}
.folders {
    width: 157px;
    overflow: hidden;
    border-right: 1px solid #1f1d20;
}
.folders .favorites, .folders .root {
    padding-left: 6px;
    font-weight: bold;
    font-size: 14px;
}
.favorites svg, .root svg {
    margin-left: 2px;
}
.folders .favorites {
    margin: 2px 0 21px;
}
.folders .child {
    padding-left: 26px;
    gap: 5px;
}
.contents {
    flex: 1;
    min-width: 0;
    display: flex;
    flex-direction: column;
}
.contents h2 {
    height: 28px;
    font-size: 14px;
    line-height: 28px;
    padding-left: 8px;
    background-color: #403e41;
    border-bottom: 1px solid #232124;
}
.contents .tree {
    flex: 1;
    overflow: hidden;
    padding-left: 24px;
}
.size-bar {
    height: 24px;
    padding: 0 24px 0 78px;
    display: flex;
    align-items: center;
    background-color: #403e41;
    border-top: 1px solid #232124;
}

/* Sliders */
input[type="range"] {
    appearance: none;
    width: 100%;
    min-width: 0;
    height: 16px;
}
input[type="range"]::-webkit-slider-runnable-track {
    height: 4px;
    background-color: #2b292c;
    border-bottom: 1px solid #4c4a4d;
}
input[type="range"]::-webkit-slider-thumb {
    appearance: none;
    width: 14px;
    height: 14px;
    margin-top: -5px;
    border-radius: 50%;
    background: linear-gradient(#868487, #605e61);
}

/* Game view */
.game {
    flex: 1;
}
.game .bar {
    padding-right: 6px;
}
.select {
    flex: 1;
    min-width: 0;
    position: relative;
    display: flex;
    height: 20px;
    border-radius: 4px;
    background: linear-gradient(#575558, #444245);
    border-top: 1px solid #646265;
    box-shadow: 0 1px 1px #29272a;
    font-size: 13px;
}
.select::after {
    content: "";
    position: absolute;
    right: 8px;
    top: 5px;
    width: 6px;
    height: 10px;
    background-color: #929092;
    pointer-events: none;
    clip-path: polygon(50% 0, 100% 40%, 50% 40%, 50% 60%, 100% 60%, 50% 100%, 0 60%, 50% 60%, 50% 40%, 0 40%);
}
.select select {
    appearance: none;
    width: 100%;
    padding: 0 7px;
}
.select.flat {
    flex: none;
    height: 22px;
    background: none;
    border: 0;
    border-radius: 0;
    box-shadow: none;
}
.select.display {
    width: 124px;
    padding-left: 9px;
    border-right: 1px solid #29272a;
}
.select.aspect {
    width: 238px;
    padding-left: 8px;
    border-right: 1px solid #29272a;
}
.scale {
    flex: 1;
    display: flex;
    align-items: center;
    gap: 8px;
    padding: 0 31px 0 6px;
}
.bar-btn {
    padding: 0 7px;
    border-left: 1px solid #29272a;
}
.bar-btn.more {
    padding: 0 4px;
}
.bar-btn .caret {
    display: block;
}
.viewport {
    flex: 1;
    background-color: #2e4a7a;
}

/* Inspector */
.inspector {
    width: 394px;
    background-color: #383639;
}
.inspector .tab {
    width: 140px;
    gap: 8px;
}
input[type="text"] {
    min-width: 0;
}
.inspector input[type="text"] {
    flex: 1;
    height: 21px;
    padding: 0 3px;
    background-color: #403e41;
    border: 1px solid #343235;
    border-top-color: #1f1d20;
}
input[type="checkbox"] {
    appearance: none;
    flex: none;
    width: 18px;
    height: 18px;
    border-radius: 3px;
    background: linear-gradient(#464447, #5a585b);
    border: 1px solid #2f2d30;
    position: relative;
}
input[type="checkbox"]:checked::after {
    content: "";
    position: absolute;
    left: 3px;
    top: 1px;
    width: 14px;
    height: 13px;
    background-color: #f2f2f2;
    clip-path: polygon(0 52%, 18% 44%, 36% 68%, 84% 0, 100% 6%, 40% 100%, 30% 100%);
}
.object-head {
    display: flex;
    gap: 16px;
    padding: 9px 9px 0 8px;
    height: 69px;
    background-color: #3f3d40;
    border-top: 1px solid #4a484b;
}
.head-rows {
    flex: 1;
    display: flex;
    flex-direction: column;
    gap: 7px;
}
.head-row {
    display: flex;
    align-items: center;
    gap: 7px;
}
.static {
    display: flex;
    align-items: center;
    gap: 6px;
}
.select.layer {
    flex: 0 1 114px;
}
.component {
    padding: 0 6px 3px 22px;
    border-top: 1px solid #504e51;
}
.component header {
    height: 24px;
    margin: 0 -3px 0 -15px;
    display: flex;
    align-items: center;
    gap: 4px;
}
.component.folded {
    padding-bottom: 0;
}
.component.folded header {
    height: 26px;
}
.component header h3, .asset-labels h3 {
    font-size: 14px;
    flex: 1;
    color: #c6c5c6;
}
.component header svg {
    margin-right: 3px;
}
.component header svg:last-child {
    margin-right: 0;
}
.component header h3.indent {
    padding-left: 22px;
}
.component.last {
    border-bottom: 1px solid #504e51;
}
.row {
    height: 26px;
    display: flex;
    align-items: center;
}
.row.compact {
    height: 23px;
}
.row.spaced {
    margin-top: 12px;
}
.label {
    width: 170px;
    flex: none;
}
.label.narrow {
    width: 92px;
}
.vector {
    flex: 1;
    display: flex;
    gap: 7px;
}
.vector label {
    flex: 1;
    min-width: 0;
    display: grid;
    grid-template-columns: 16px 1fr;
    align-items: center;
}
.vector.rect {
    padding-left: 21px;
}
.vector.rect label {
    grid-template-columns: 18px 1fr;
}
.swatch {
    flex: 1;
    height: 21px;
    background-color: #2e4a7a;
    border: 1px solid #1b191c;
    border-bottom: 4px solid #000;
}
.picker {
    margin-left: 7px;
}
.row .fov {
    width: 118px;
    margin-right: 8px;
}
.plane {
    flex: 1;
    min-width: 0;
    padding-left: 2px;
    display: grid;
    grid-template-columns: 48px 1fr;
    align-items: center;
}
.add {
    margin: 14px 36px 0 30px;
    height: 30px;
}
.asset-labels {
    margin-top: auto;
    height: 89px;
    display: flex;
    flex-direction: column;
    background-color: #2a282b;
}
.asset-labels h3 {
    flex: none;
    height: 23px;
    line-height: 22px;
    padding-left: 6px;
    color: #e0dfe0;
    background: linear-gradient(#4a484b, #3b393c);
    box-shadow: 0 2px 6px #161417;
}
.tag-btn {
    align-self: flex-end;
    display: flex;
    align-items: center;
    justify-content: center;
    width: 28px;
    height: 22px;
    margin: 9px 6px 10px;
    border-radius: 11px;
    background-color: #27457d;
}
.bundle {
    display: flex;
    align-items: center;
    gap: 10px;
    padding: 0 6px;
}
.bundle label {
    width: 118px;
}
.select.variant {
    flex: 0 1 68px;
}

/* Status bar */
.statusbar {
    height: 30px;
    display: flex;
    align-items: center;
    gap: 5px;
    padding: 6px 4px 0;
    color: #c02630;
}
```
